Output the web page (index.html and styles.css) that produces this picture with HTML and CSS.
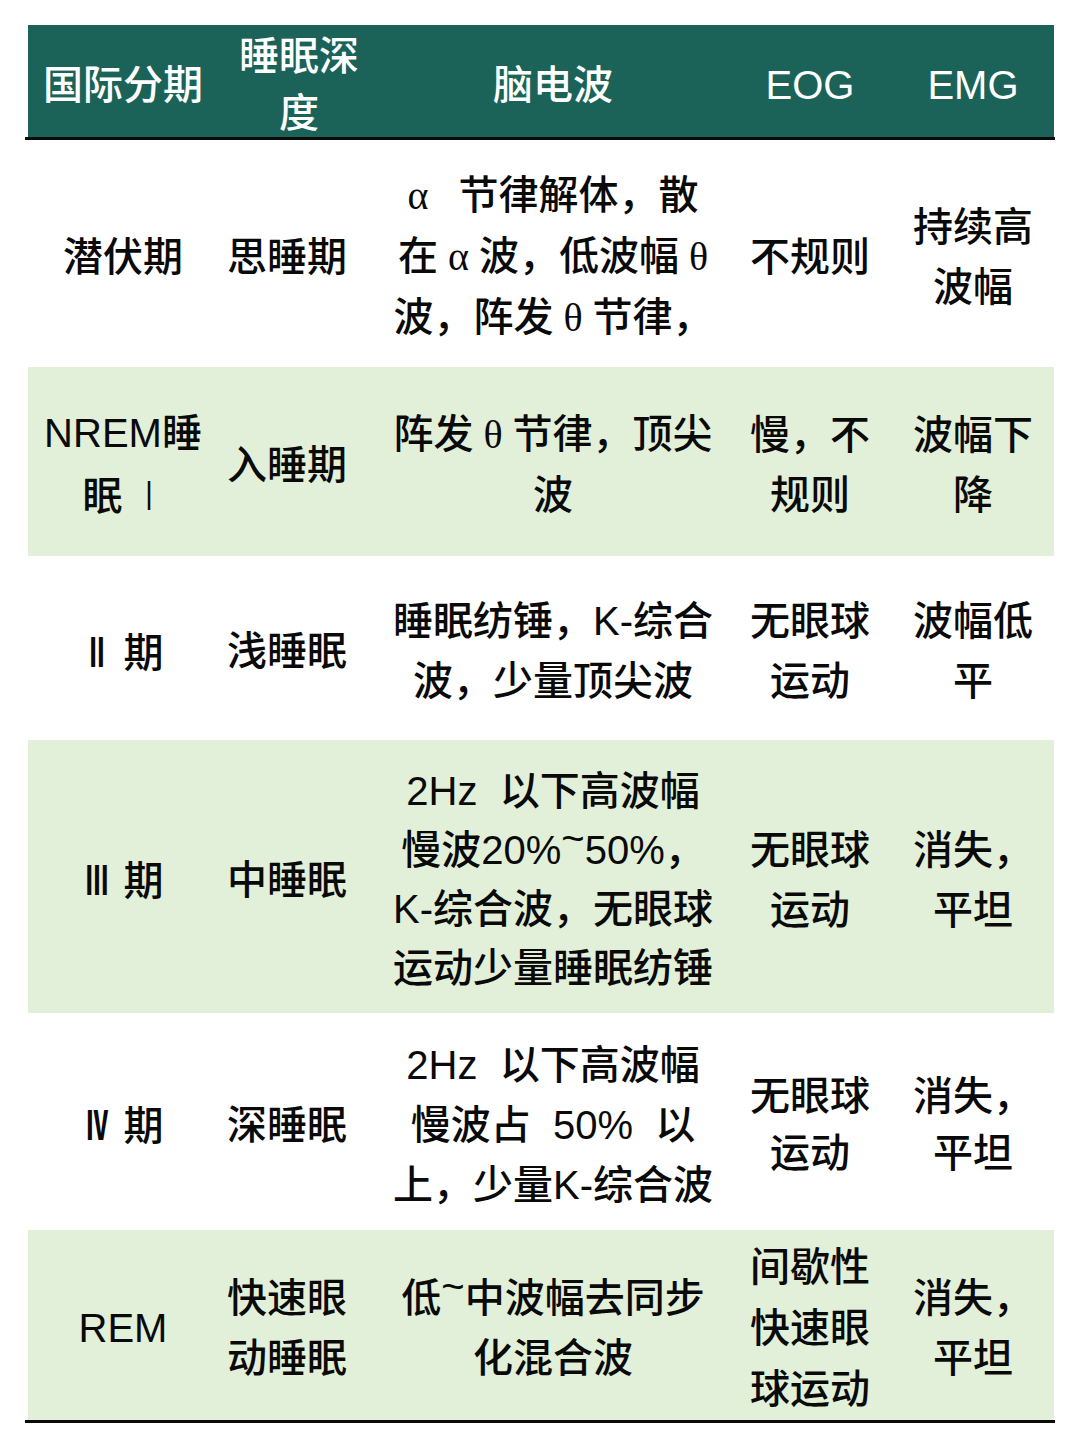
FILE: index.html
```html
<!DOCTYPE html>
<html lang="zh-CN">
<head>
<meta charset="utf-8">
<title>睡眠分期</title>
<link rel="stylesheet" href="styles.css">
</head>
<body>
<div class="table">
  <div class="row head">
    <div class="c"><p>国际分期</p></div>
    <div class="c c2h"><p class="tight">睡眠深<br>度</p></div>
    <div class="c"><p>脑电波</p></div>
    <div class="c"><p>EOG</p></div>
    <div class="c c5"><p>EMG</p></div>
  </div>
  <div class="rule"></div>

  <div class="row r1">
    <div class="c"><p>潜伏期</p></div>
    <div class="c"><p>思睡期</p></div>
    <div class="c"><p><span class="gk">α&nbsp;&nbsp; </span>节律解体，散<br>在<span class="gk"> α </span>波，低波幅<span class="gk"> θ</span><br>波，阵发<span class="gk"> θ </span>节律，</p></div>
    <div class="c"><p>不规则</p></div>
    <div class="c c5"><p>持续高<br>波幅</p></div>
  </div>

  <div class="row r2 alt">
    <div class="c"><p>NREM睡<br>眠 <span class="rn">Ⅰ</span></p></div>
    <div class="c"><p>入睡期</p></div>
    <div class="c"><p>阵发<span class="gk"> θ </span>节律，顶尖<br>波</p></div>
    <div class="c"><p>慢，不<br>规则</p></div>
    <div class="c c5"><p>波幅下<br>降</p></div>
  </div>

  <div class="row r3">
    <div class="c c1r"><p><span class="rn bold">Ⅱ</span> 期</p></div>
    <div class="c"><p>浅睡眠</p></div>
    <div class="c"><p>睡眠纺锤，K-综合<br>波，少量顶尖波</p></div>
    <div class="c"><p>无眼球<br>运动</p></div>
    <div class="c c5"><p>波幅低<br>平</p></div>
  </div>

  <div class="row r4 alt">
    <div class="c c1r"><p><span class="rn bold">Ⅲ</span> 期</p></div>
    <div class="c"><p>中睡眠</p></div>
    <div class="c"><p class="l59">2Hz&nbsp; 以下高波幅<br>慢波20%<span class="tl">~</span>50%，<br>K-综合波，无眼球<br>运动少量睡眠纺锤</p></div>
    <div class="c"><p>无眼球<br>运动</p></div>
    <div class="c c5"><p>消失，<br>平坦</p></div>
  </div>

  <div class="row r5">
    <div class="c c1r"><p><span class="rn bold">Ⅳ</span> 期</p></div>
    <div class="c"><p>深睡眠</p></div>
    <div class="c"><p>2Hz&nbsp; 以下高波幅<br>慢波占&nbsp; 50%&nbsp; 以<br>上，少量K-综合波</p></div>
    <div class="c"><p class="tight">无眼球<br>运动</p></div>
    <div class="c c5"><p class="tight">消失，<br>平坦</p></div>
  </div>

  <div class="row r6 alt">
    <div class="c"><p>REM</p></div>
    <div class="c"><p>快速眼<br>动睡眠</p></div>
    <div class="c"><p>低<span class="tl">~</span>中波幅去同步<br>化混合波</p></div>
    <div class="c"><p class="l61">间歇性<br>快速眼<br>球运动</p></div>
    <div class="c c5"><p>消失，<br>平坦</p></div>
  </div>
  <div class="rule"></div>
</div>
</body>
</html>
```

FILE: styles.css
```css
html, body {
  margin: 0;
  padding: 0;
  background: #ffffff;
}

body {
  font-family: "Liberation Sans", "Noto Sans CJK SC", sans-serif;
  font-size: 40px;
  font-weight: 500;
  color: #0a0a0a;
}

.table {
  width: 1030px;
  margin: 25px 0 0 25px;
}

.rule {
  height: 3px;
  background: #0b0b0b;
}

.row {
  display: grid;
  grid-template-columns: 190px 138px 394px 120px 184px;
  width: 1026px;
  margin-left: 3px;
}

.alt {
  background: #e2f0d9;
}

.head {
  height: 112px;
  background: #1b6358;
  color: #ffffff;
}

.r1 { height: 227px; }
.r2 { height: 189px; }
.r3 { height: 184px; }
.r4 { height: 273px; }
.r5 { height: 217px; }
.r6 { height: 190px; }

.c {
  display: flex;
  align-items: center;
  justify-content: center;
  text-align: center;
}

.c5 {
  padding-left: 22px;
}

.c2h {
  padding-left: 24px;
}

.c1r {
  padding-left: 0;
}

.c p {
  margin: 0;
  line-height: 60px;
  white-space: nowrap;
  padding-top: 6px;
}

.head .c p {
  padding-top: 3px;
}

.c p.tight {
  line-height: 57px;
}

.c p.l59 {
  line-height: 59px;
}

.c p.l61 {
  line-height: 61px;
}

.gk {
  font-family: "Liberation Serif", serif;
  font-weight: 400;
}

.rn {
  display: inline-block;
  font-family: "Noto Sans CJK SC", sans-serif;
  transform: scaleX(0.5);
  margin: 0 -5px;
}

.rn.bold {
  font-weight: 900;
  transform: scaleX(0.55);
}

.tl {
  vertical-align: 0.3em;
  line-height: 0;
}
```
